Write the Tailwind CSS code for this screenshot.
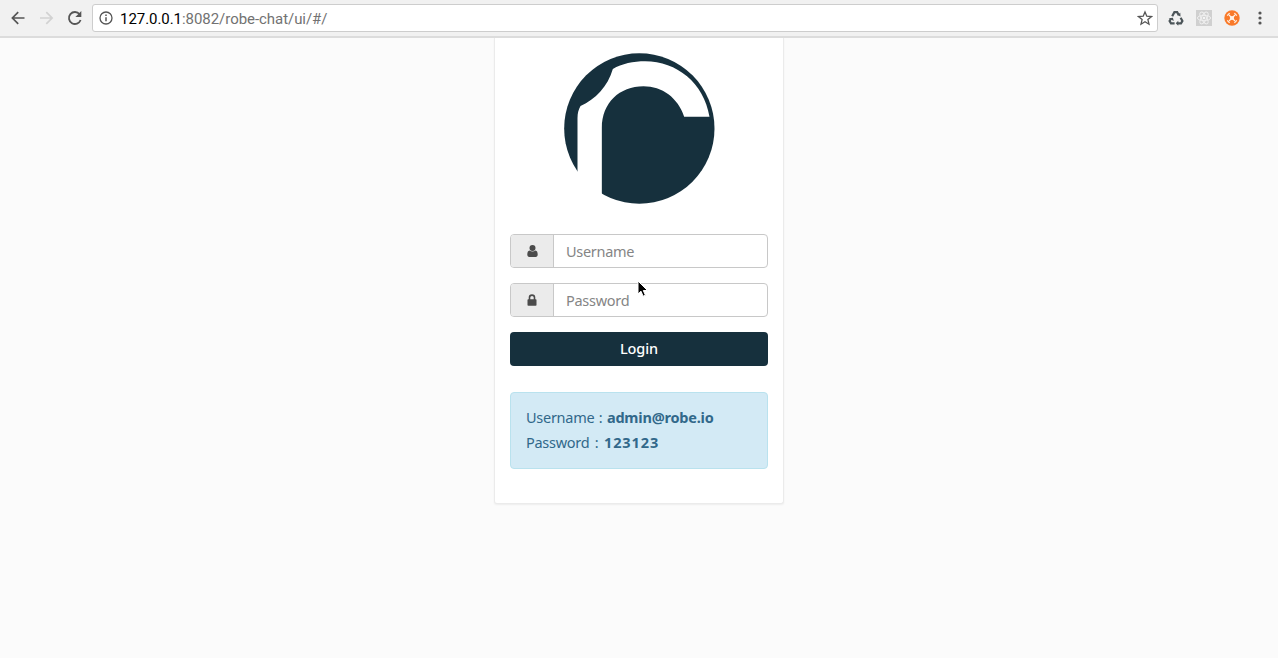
<!DOCTYPE html>
<html lang="en">
<head>
<meta charset="utf-8">
<title>Robe Chat</title>
<script src="https://cdn.jsdelivr.net/npm/@tailwindcss/browser@4"></script>
</head>
<body class="h-[658px] overflow-hidden bg-[#fbfbfb] font-['Noto_Sans',sans-serif]">
<div class="flex h-screen flex-col">
  <header class="flex h-[38px] shrink-0 items-start border-b-2 border-[#dcdcdc] bg-[#f1f1f1] pt-1 font-['Roboto',sans-serif]">
    <div class="flex h-7 w-[92px] shrink-0 items-center">
      <svg class="ml-[10px] h-4 w-4" viewBox="0 0 16 16" fill="none" stroke="#555" stroke-width="1.7"><path d="M14.5 8H2.5M8.2 2.2 2.4 8l5.8 5.8"/></svg>
      <svg class="ml-[13px] h-4 w-4" viewBox="0 0 16 16" fill="none" stroke="#d2d2d2" stroke-width="1.7"><path d="M1 8h12M7.3 2.2 13.1 8l-5.8 5.8"/></svg>
      <svg class="ml-3 h-4 w-4" viewBox="0 0 16 16" fill="none" stroke="#555" stroke-width="1.8"><path d="M12.6 4.2A6 6 0 1 0 13.6 10"/><path d="M14.3 1v6H8.4z" fill="#555" stroke="none"/></svg>
    </div>
    <div class="flex h-7 w-[1066px] shrink-0 items-center rounded-[3px] border border-[#cdcdcd] bg-white">
      <svg class="ml-1.5 h-[14px] w-[14px]" viewBox="0 0 14 14" fill="none" stroke="#555" stroke-width="1.3"><circle cx="7" cy="7" r="6"/><path d="M7 6.2v4M7 3.6v1.5" stroke-width="1.5"/></svg>
      <span class="ml-[7px] pt-[3px] text-[15px] leading-none tracking-[-0.05px] text-[#727272]"><span class="text-black">127.0.0.1</span>:8082/robe-chat/ui/#/</span>
      <svg class="mr-[4px] ml-auto h-4 w-4" viewBox="0 0 16 16" fill="none" stroke="#555" stroke-width="1.3"><path d="m8 1.9 1.8 4.3 4.7.4-3.6 3 1.1 4.6-4-2.4-4 2.4 1.1-4.6-3.6-3 4.7-.4z"/></svg>
    </div>
    <div class="flex h-7 flex-1 items-center">
      <svg class="ml-[10px] h-4 w-4" viewBox="0 0 16 16" fill="none" stroke="#4c5559" stroke-width="2.2"><path d="M4.2 6.2 6.4 2.2h2.8l1.5 2.8"/><path d="M12.6 7.8 14.4 11l-1.4 2.4H9.8"/><path d="M6.6 13.4H3L1.6 11l1.5-2.5"/><path d="m12.3 2.8.2 3.7-3.4-1.6zM10.3 10.8v5l-2.6-2.5zM.6 8.2l4.3-.4.9 3.2z" fill="#4c5559" stroke="none"/></svg>
      <svg class="ml-3 h-4 w-4" viewBox="0 0 17 17" fill="none"><path d="M0 0h17v17H0z" fill="#d0d0d0"/><g stroke="#f0f0f0" stroke-width="1"><ellipse cx="8.5" cy="8.5" rx="7" ry="2.8"/><ellipse cx="8.5" cy="8.5" rx="7" ry="2.8" transform="rotate(60 8.5 8.5)"/><ellipse cx="8.5" cy="8.5" rx="7" ry="2.8" transform="rotate(120 8.5 8.5)"/></g><circle cx="8.5" cy="8.5" r="1.4" fill="#f5f5f5"/></svg>
      <svg class="ml-[12px] h-4 w-4" viewBox="0 0 16 16"><circle cx="8" cy="8" r="7.7" fill="#f97a2a"/><g fill="none" stroke="#fff3e8"><path d="m5 5 6 6M11 5l-6 6" stroke-width="1.2"/><circle cx="8" cy="8" r="2.1" fill="#fff3e8" stroke="none"/><path d="M3.2 5.6 5.6 3.2M10.4 3.2l2.4 2.4M3.2 10.4l2.4 2.4M10.4 12.8l2.4-2.4" stroke-width="1.2"/></g></svg>
      <svg class="ml-[18px] h-[14px] w-1" viewBox="0 0 4 14" fill="#555"><circle cx="2" cy="2" r="1.6"/><circle cx="2" cy="7" r="1.6"/><circle cx="2" cy="12" r="1.6"/></svg>
    </div>
  </header>
  <main class="flex flex-1 items-start justify-center">
    <section class="flex h-[466px] w-[290px] flex-col rounded-b-[3px] border border-t-0 border-[#ebebeb] bg-white px-[15px] pt-[15px] shadow-[0_1px_2px_rgba(0,0,0,0.06)]">
      <svg class="mx-auto h-[151px] w-[151px] shrink-0" viewBox="41.5 50 453 453">
        <circle cx="267.5" cy="276.5" r="225.5" fill="#16303d"/>
        <path fill="#fff" d="M82 520V245C82 230 85 220 91 209C136 189 173 150 188 98C215 82 250 75 285 75C380 75 461 140 478 241H402C383 184 336 150 280 150C208 150 155 200 155 275V520Z"/>
      </svg>
      <div class="mt-[30px] flex h-[34px] w-[258px] shrink-0 overflow-hidden rounded-[4px] border border-[#c8c8c8] bg-white">
        <div class="flex w-[43px] items-center justify-center border-r border-[#c8c8c8] bg-[#ebebeb]"><svg class="h-3 w-[11px]" viewBox="0 0 11 12" fill="#4b4b4b"><circle cx="5.5" cy="3" r="3"/><path d="M2.6 5.4C.8 5.5.3 7.4.3 9.6.3 11 1 12 2.3 12h6.4c1.3 0 2-1 2-2.4 0-2.2-.5-4.1-2.3-4.2-1.6 1.5-4.2 1.5-5.8 0z"/></svg></div>
        <span class="pl-3 text-[14.5px] leading-[33px] tracking-[-0.3px] text-[#858585]">Username</span>
      </div>
      <div class="mt-[15px] flex h-[34px] w-[258px] shrink-0 overflow-hidden rounded-[4px] border border-[#c8c8c8] bg-white">
        <div class="flex w-[43px] items-center justify-center border-r border-[#c8c8c8] bg-[#ebebeb]"><svg class="h-3 w-[10px]" viewBox="0 0 10 12"><rect x=".5" y="5.2" width="9" height="6.6" rx=".8" fill="#4b4b4b"/><path d="M2.5 6V3.6a2.5 2.5 0 0 1 5 0V6" fill="none" stroke="#4b4b4b" stroke-width="1.6"/></svg></div>
        <span class="pl-3 text-[14.5px] leading-[33px] tracking-[-0.28px] text-[#858585]">Password</span>
      </div>
      <button class="mt-[15px] h-[34px] w-[258px] shrink-0 rounded-[4px] bg-[#16303d] pb-[2px] text-[14.5px] leading-[32px] font-medium tracking-[-0.1px] text-white">Login</button>
      <div class="mt-[26px] h-[77px] w-[258px] shrink-0 rounded-[4px] border border-[#b9e2ee] bg-[#d3eaf5] pt-[12px] pl-[15px] text-[14.5px] leading-[25px] tracking-[-0.28px] text-[#31688a]">
        <p>Username <span class="ml-px">:</span> <b class="ml-px tracking-[-0.2px]">admin@robe.io</b></p>
        <p>Password <span class="ml-[2px]">:</span> <b class="ml-[2px] tracking-[0.9px]">123123</b></p>
      </div>
    </section>
  </main>
</div>
<svg class="absolute top-[280px] left-[637px] h-[18px] w-3" viewBox="0 0 12 18"><path d="M1 1v13l3-2.8 2.1 5 2.3-1-2.1-4.7h4.2z" fill="#000" stroke="#fff" stroke-width="1"/></svg>
</body>
</html>
